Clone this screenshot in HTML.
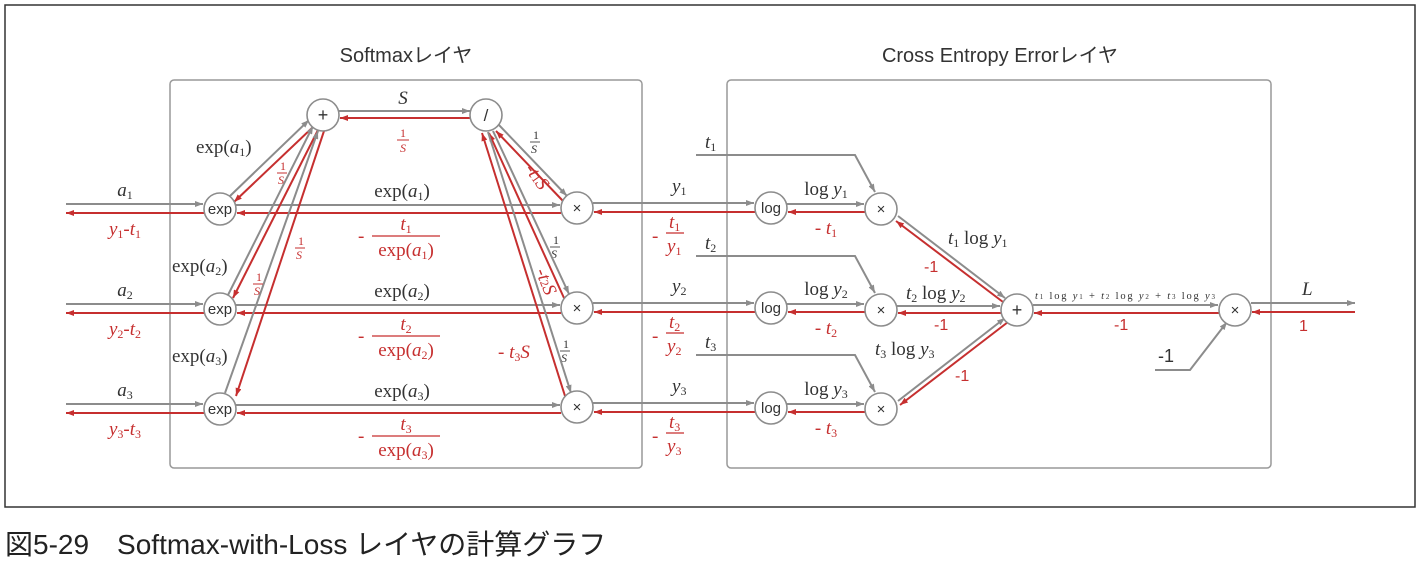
<!DOCTYPE html>
<html><head><meta charset="utf-8"><style>
html,body{margin:0;padding:0;background:#fff;width:1421px;height:566px;overflow:hidden}
svg{display:block}
.g{stroke:#8c8c8c;stroke-width:2;fill:none}
.r{stroke:#c62f2f;stroke-width:2;fill:none}
.n{fill:#fff;stroke:#8c8c8c;stroke-width:1.6}
.m{font-family:"Liberation Serif",serif;fill:#333}
.mr{font-family:"Liberation Serif",serif;fill:#c62f2f}
.s{font-family:"Liberation Sans",sans-serif;fill:#333}
.sr{font-family:"Liberation Sans",sans-serif;fill:#c62f2f}
.t{font-family:"Liberation Sans","Noto Sans CJK JP",sans-serif;fill:#333}
</style></head><body>
<svg width="1421" height="566" viewBox="0 0 1421 566" xmlns="http://www.w3.org/2000/svg" font-size="19">
<defs>
<marker id="ag" markerWidth="8" markerHeight="6" refX="8" refY="3" orient="auto" markerUnits="userSpaceOnUse"><path d="M0,0 L8,3 L0,6z" fill="#8c8c8c"/></marker>
<marker id="ar" markerWidth="8" markerHeight="6" refX="8" refY="3" orient="auto" markerUnits="userSpaceOnUse"><path d="M0,0 L8,3 L0,6z" fill="#c62f2f"/></marker>
</defs>
<rect x="5" y="5" width="1410" height="502" fill="none" stroke="#333" stroke-width="1.5"/>
<rect x="170" y="80" width="472" height="388" rx="4" fill="none" stroke="#999" stroke-width="1.5"/>
<rect x="727" y="80" width="544" height="388" rx="4" fill="none" stroke="#999" stroke-width="1.5"/>
<text x="406" y="62" class="t" font-size="20" text-anchor="middle">Softmaxレイヤ</text>
<text x="1000" y="62" class="t" font-size="20" text-anchor="middle">Cross Entropy Errorレイヤ</text>

<line class="g" x1="66" y1="204" x2="203" y2="204" marker-end="url(#ag)"/>
<line class="r" x1="204" y1="213" x2="66" y2="213" marker-end="url(#ar)"/>
<line class="g" x1="66" y1="304" x2="203" y2="304" marker-end="url(#ag)"/>
<line class="r" x1="204" y1="313" x2="66" y2="313" marker-end="url(#ar)"/>
<line class="g" x1="66" y1="404" x2="203" y2="404" marker-end="url(#ag)"/>
<line class="r" x1="204" y1="413" x2="66" y2="413" marker-end="url(#ar)"/>
<text x="125" y="196" class="m" text-anchor="middle"><tspan font-style="italic">a</tspan><tspan font-size="12" dy="3">1</tspan></text>
<text x="125" y="296" class="m" text-anchor="middle"><tspan font-style="italic">a</tspan><tspan font-size="12" dy="3">2</tspan></text>
<text x="125" y="396" class="m" text-anchor="middle"><tspan font-style="italic">a</tspan><tspan font-size="12" dy="3">3</tspan></text>
<text x="125" y="235" class="mr" text-anchor="middle"><tspan font-style="italic">y</tspan><tspan font-size="12" dy="3">1</tspan><tspan dy="-3">-</tspan><tspan font-style="italic">t</tspan><tspan font-size="12" dy="3">1</tspan></text>
<text x="125" y="335" class="mr" text-anchor="middle"><tspan font-style="italic">y</tspan><tspan font-size="12" dy="3">2</tspan><tspan dy="-3">-</tspan><tspan font-style="italic">t</tspan><tspan font-size="12" dy="3">2</tspan></text>
<text x="125" y="435" class="mr" text-anchor="middle"><tspan font-style="italic">y</tspan><tspan font-size="12" dy="3">3</tspan><tspan dy="-3">-</tspan><tspan font-style="italic">t</tspan><tspan font-size="12" dy="3">3</tspan></text>

<line class="g" x1="236" y1="205" x2="560" y2="205" marker-end="url(#ag)"/>
<line class="r" x1="561" y1="213" x2="237" y2="213" marker-end="url(#ar)"/>
<line class="g" x1="236" y1="305" x2="560" y2="305" marker-end="url(#ag)"/>
<line class="r" x1="561" y1="313" x2="237" y2="313" marker-end="url(#ar)"/>
<line class="g" x1="236" y1="405" x2="560" y2="405" marker-end="url(#ag)"/>
<line class="r" x1="561" y1="413" x2="237" y2="413" marker-end="url(#ar)"/>
<text x="402" y="197" class="m" text-anchor="middle">exp(<tspan font-style="italic">a</tspan><tspan font-size="12" dy="3">1</tspan><tspan dy="-3">)</tspan></text>
<text x="402" y="297" class="m" text-anchor="middle">exp(<tspan font-style="italic">a</tspan><tspan font-size="12" dy="3">2</tspan><tspan dy="-3">)</tspan></text>
<text x="402" y="397" class="m" text-anchor="middle">exp(<tspan font-style="italic">a</tspan><tspan font-size="12" dy="3">3</tspan><tspan dy="-3">)</tspan></text>

<text x="358" y="242" class="mr">-</text><text x="406" y="230" class="mr" text-anchor="middle" font-style="italic">t<tspan font-size="12" font-style="normal" dy="3">1</tspan></text><line x1="372" y1="236" x2="440" y2="236" stroke="#c62f2f" stroke-width="1.2"/><text x="406" y="256" class="mr" text-anchor="middle">exp(<tspan font-style="italic">a</tspan><tspan font-size="12" dy="3">1</tspan><tspan dy="-3">)</tspan></text>
<text x="358" y="342" class="mr">-</text><text x="406" y="330" class="mr" text-anchor="middle" font-style="italic">t<tspan font-size="12" font-style="normal" dy="3">2</tspan></text><line x1="372" y1="336" x2="440" y2="336" stroke="#c62f2f" stroke-width="1.2"/><text x="406" y="356" class="mr" text-anchor="middle">exp(<tspan font-style="italic">a</tspan><tspan font-size="12" dy="3">2</tspan><tspan dy="-3">)</tspan></text>
<text x="358" y="442" class="mr">-</text><text x="406" y="430" class="mr" text-anchor="middle" font-style="italic">t<tspan font-size="12" font-style="normal" dy="3">3</tspan></text><line x1="372" y1="436" x2="440" y2="436" stroke="#c62f2f" stroke-width="1.2"/><text x="406" y="456" class="mr" text-anchor="middle">exp(<tspan font-style="italic">a</tspan><tspan font-size="12" dy="3">3</tspan><tspan dy="-3">)</tspan></text>

<line class="g" x1="339" y1="111" x2="470" y2="111" marker-end="url(#ag)"/>
<line class="r" x1="470" y1="118" x2="340" y2="118" marker-end="url(#ar)"/>
<text x="403" y="104" class="m" text-anchor="middle" font-style="italic">S</text>
<g font-size="12">
<text x="403" y="137" class="mr" text-anchor="middle">1</text><line x1="397" y1="140" x2="409" y2="140" stroke="#c62f2f"/><text x="403" y="152" class="mr" text-anchor="middle" font-style="italic">S</text>
</g>

<line class="g" x1="230" y1="196" x2="309" y2="120" marker-end="url(#ag)"/>
<line class="r" x1="313" y1="127" x2="234" y2="202" marker-end="url(#ar)"/>
<line class="g" x1="228" y1="295" x2="313" y2="126" marker-end="url(#ag)"/>
<line class="r" x1="318" y1="130" x2="233" y2="298" marker-end="url(#ar)"/>
<line class="g" x1="225" y1="393" x2="318" y2="131" marker-end="url(#ag)"/>
<line class="r" x1="324" y1="131" x2="236" y2="396" marker-end="url(#ar)"/>
<text x="196" y="153" class="m">exp(<tspan font-style="italic">a</tspan><tspan font-size="12" dy="3">1</tspan><tspan dy="-3">)</tspan></text>
<text x="172" y="272" class="m">exp(<tspan font-style="italic">a</tspan><tspan font-size="12" dy="3">2</tspan><tspan dy="-3">)</tspan></text>
<text x="172" y="362" class="m">exp(<tspan font-style="italic">a</tspan><tspan font-size="12" dy="3">3</tspan><tspan dy="-3">)</tspan></text>
<g font-size="12">
<text x="280" y="170" class="mr">1</text><line x1="277" y1="173" x2="287" y2="173" stroke="#c62f2f"/><text x="278" y="184" class="mr" font-style="italic">S</text>
<text x="298" y="245" class="mr">1</text><line x1="295" y1="248" x2="305" y2="248" stroke="#c62f2f"/><text x="296" y="259" class="mr" font-style="italic">S</text>
<text x="256" y="281" class="mr">1</text><line x1="253" y1="284" x2="263" y2="284" stroke="#c62f2f"/><text x="254" y="295" class="mr" font-style="italic">S</text>
<text x="533" y="139" class="m">1</text><line x1="530" y1="142" x2="540" y2="142" stroke="#555"/><text x="531" y="153" class="m" font-style="italic">S</text>
<text x="553" y="244" class="m">1</text><line x1="550" y1="247" x2="560" y2="247" stroke="#555"/><text x="551" y="258" class="m" font-style="italic">S</text>
<text x="563" y="348" class="m">1</text><line x1="560" y1="351" x2="570" y2="351" stroke="#555"/><text x="561" y="362" class="m" font-style="italic">S</text>
</g>

<line class="g" x1="498" y1="124" x2="567" y2="196" marker-end="url(#ag)"/>
<line class="r" x1="563" y1="201" x2="496" y2="131" marker-end="url(#ar)"/>
<line class="g" x1="493" y1="131" x2="569" y2="294" marker-end="url(#ag)"/>
<line class="r" x1="564" y1="298" x2="489" y2="133" marker-end="url(#ar)"/>
<line class="g" x1="488" y1="132" x2="571" y2="393" marker-end="url(#ag)"/>
<line class="r" x1="565" y1="396" x2="482" y2="133" marker-end="url(#ar)"/>
<text x="514" y="175" class="mr" transform="rotate(55 525 182)">-<tspan font-style="italic">t</tspan><tspan font-size="12">1</tspan><tspan font-style="italic">S</tspan></text>
<text x="522" y="277" class="mr" transform="rotate(68 533 284)">-<tspan font-style="italic">t</tspan><tspan font-size="12">2</tspan><tspan font-style="italic">S</tspan></text>
<text x="498" y="358" class="mr">-<tspan font-style="italic"> t</tspan><tspan font-size="12" dy="3">3</tspan><tspan font-style="italic" dy="-3">S</tspan></text>

<line class="g" x1="593" y1="203" x2="754" y2="203" marker-end="url(#ag)"/>
<line class="r" x1="755" y1="212" x2="594" y2="212" marker-end="url(#ar)"/>
<line class="g" x1="593" y1="303" x2="754" y2="303" marker-end="url(#ag)"/>
<line class="r" x1="755" y1="312" x2="594" y2="312" marker-end="url(#ar)"/>
<line class="g" x1="593" y1="403" x2="754" y2="403" marker-end="url(#ag)"/>
<line class="r" x1="755" y1="412" x2="594" y2="412" marker-end="url(#ar)"/>
<text x="672" y="192" class="m" font-style="italic">y<tspan font-size="12" font-style="normal" dy="3">1</tspan></text>
<text x="672" y="292" class="m" font-style="italic">y<tspan font-size="12" font-style="normal" dy="3">2</tspan></text>
<text x="672" y="392" class="m" font-style="italic">y<tspan font-size="12" font-style="normal" dy="3">3</tspan></text>
<text x="652" y="242" class="mr">-</text><text x="669" y="228" class="mr" font-style="italic">t<tspan font-size="12" font-style="normal" dy="3">1</tspan></text><line x1="666" y1="233" x2="684" y2="233" stroke="#c62f2f" stroke-width="1.2"/><text x="667" y="252" class="mr" font-style="italic">y<tspan font-size="12" font-style="normal" dy="3">1</tspan></text>
<text x="652" y="342" class="mr">-</text><text x="669" y="328" class="mr" font-style="italic">t<tspan font-size="12" font-style="normal" dy="3">2</tspan></text><line x1="666" y1="333" x2="684" y2="333" stroke="#c62f2f" stroke-width="1.2"/><text x="667" y="352" class="mr" font-style="italic">y<tspan font-size="12" font-style="normal" dy="3">2</tspan></text>
<text x="652" y="442" class="mr">-</text><text x="669" y="428" class="mr" font-style="italic">t<tspan font-size="12" font-style="normal" dy="3">3</tspan></text><line x1="666" y1="433" x2="684" y2="433" stroke="#c62f2f" stroke-width="1.2"/><text x="667" y="452" class="mr" font-style="italic">y<tspan font-size="12" font-style="normal" dy="3">3</tspan></text>

<line class="g" x1="787" y1="204" x2="864" y2="204" marker-end="url(#ag)"/>
<line class="r" x1="865" y1="212" x2="788" y2="212" marker-end="url(#ar)"/>
<line class="g" x1="787" y1="304" x2="864" y2="304" marker-end="url(#ag)"/>
<line class="r" x1="865" y1="312" x2="788" y2="312" marker-end="url(#ar)"/>
<line class="g" x1="787" y1="404" x2="864" y2="404" marker-end="url(#ag)"/>
<line class="r" x1="865" y1="412" x2="788" y2="412" marker-end="url(#ar)"/>
<text x="826" y="195" class="m" text-anchor="middle">log <tspan font-style="italic">y</tspan><tspan font-size="12" dy="3">1</tspan></text>
<text x="826" y="295" class="m" text-anchor="middle">log <tspan font-style="italic">y</tspan><tspan font-size="12" dy="3">2</tspan></text>
<text x="826" y="395" class="m" text-anchor="middle">log <tspan font-style="italic">y</tspan><tspan font-size="12" dy="3">3</tspan></text>
<text x="826" y="234" class="mr" text-anchor="middle">-<tspan font-style="italic"> t</tspan><tspan font-size="12" dy="3">1</tspan></text>
<text x="826" y="334" class="mr" text-anchor="middle">-<tspan font-style="italic"> t</tspan><tspan font-size="12" dy="3">2</tspan></text>
<text x="826" y="434" class="mr" text-anchor="middle">-<tspan font-style="italic"> t</tspan><tspan font-size="12" dy="3">3</tspan></text>

<polyline class="g" points="696,155 855,155 875,192" marker-end="url(#ag)"/>
<polyline class="g" points="696,256 855,256 875,293" marker-end="url(#ag)"/>
<polyline class="g" points="696,355 855,355 875,392" marker-end="url(#ag)"/>
<text x="705" y="148" class="m" font-style="italic">t<tspan font-size="12" font-style="normal" dy="3">1</tspan></text>
<text x="705" y="249" class="m" font-style="italic">t<tspan font-size="12" font-style="normal" dy="3">2</tspan></text>
<text x="705" y="348" class="m" font-style="italic">t<tspan font-size="12" font-style="normal" dy="3">3</tspan></text>

<line class="g" x1="898" y1="216" x2="1005" y2="298" marker-end="url(#ag)"/>
<line class="r" x1="1003" y1="302" x2="896" y2="221" marker-end="url(#ar)"/>
<line class="g" x1="897" y1="306" x2="1000" y2="306" marker-end="url(#ag)"/>
<line class="r" x1="1001" y1="313" x2="898" y2="313" marker-end="url(#ar)"/>
<line class="g" x1="898" y1="401" x2="1005" y2="318" marker-end="url(#ag)"/>
<line class="r" x1="1008" y1="322" x2="900" y2="405" marker-end="url(#ar)"/>
<text x="948" y="244" class="m"><tspan font-style="italic">t</tspan><tspan font-size="12" dy="3">1</tspan><tspan dy="-3"> log </tspan><tspan font-style="italic">y</tspan><tspan font-size="12" dy="3">1</tspan></text>
<text x="906" y="299" class="m"><tspan font-style="italic">t</tspan><tspan font-size="12" dy="3">2</tspan><tspan dy="-3"> log </tspan><tspan font-style="italic">y</tspan><tspan font-size="12" dy="3">2</tspan></text>
<text x="875" y="355" class="m"><tspan font-style="italic">t</tspan><tspan font-size="12" dy="3">3</tspan><tspan dy="-3"> log </tspan><tspan font-style="italic">y</tspan><tspan font-size="12" dy="3">3</tspan></text>
<g font-size="16">
<text x="924" y="272" class="sr">-1</text>
<text x="934" y="330" class="sr">-1</text>
<text x="955" y="381" class="sr">-1</text>
<text x="1114" y="330" class="sr">-1</text>
<text x="1299" y="331" class="sr">1</text>
</g>

<line class="g" x1="1033" y1="305" x2="1218" y2="305" marker-end="url(#ag)"/>
<line class="r" x1="1219" y1="313" x2="1034" y2="313" marker-end="url(#ar)"/>
<text x="1035" y="299" class="m" font-size="10.5" textLength="180"><tspan font-style="italic">t</tspan><tspan font-size="7">1</tspan> log <tspan font-style="italic">y</tspan><tspan font-size="7">1</tspan> + <tspan font-style="italic">t</tspan><tspan font-size="7">2</tspan> log <tspan font-style="italic">y</tspan><tspan font-size="7">2</tspan> + <tspan font-style="italic">t</tspan><tspan font-size="7">3</tspan> log <tspan font-style="italic">y</tspan><tspan font-size="7">3</tspan></text>
<polyline class="g" points="1155,370 1190,370 1227,322" marker-end="url(#ag)"/>
<text x="1158" y="362" class="s" font-size="18">-1</text>
<line class="g" x1="1251" y1="303" x2="1355" y2="303" marker-end="url(#ag)"/>
<line class="r" x1="1355" y1="312" x2="1252" y2="312" marker-end="url(#ar)"/>
<text x="1302" y="295" class="m" font-style="italic">L</text>

<circle class="n" cx="220" cy="209" r="16"/><circle class="n" cx="220" cy="309" r="16"/><circle class="n" cx="220" cy="409" r="16"/>
<circle class="n" cx="323" cy="115" r="16"/><circle class="n" cx="486" cy="115" r="16"/>
<circle class="n" cx="577" cy="208" r="16"/><circle class="n" cx="577" cy="308" r="16"/><circle class="n" cx="577" cy="407" r="16"/>
<circle class="n" cx="771" cy="208" r="16"/><circle class="n" cx="771" cy="308" r="16"/><circle class="n" cx="771" cy="408" r="16"/>
<circle class="n" cx="881" cy="209" r="16"/><circle class="n" cx="881" cy="310" r="16"/><circle class="n" cx="881" cy="409" r="16"/>
<circle class="n" cx="1017" cy="310" r="16"/><circle class="n" cx="1235" cy="310" r="16"/>
<g font-size="15" text-anchor="middle">
<text x="220" y="214" class="s">exp</text>
<text x="220" y="314" class="s">exp</text>
<text x="220" y="414" class="s">exp</text>
<text x="323" y="121" class="s" font-size="18">+</text>
<text x="486" y="121" class="s" font-size="17">/</text>
<text x="577" y="213" class="s">×</text>
<text x="577" y="313" class="s">×</text>
<text x="577" y="412" class="s">×</text>
<text x="771" y="213" class="s">log</text>
<text x="771" y="313" class="s">log</text>
<text x="771" y="413" class="s">log</text>
<text x="881" y="214" class="s">×</text>
<text x="881" y="315" class="s">×</text>
<text x="881" y="414" class="s">×</text>
<text x="1017" y="316" class="s" font-size="18">+</text>
<text x="1235" y="315" class="s">×</text>
</g>

<text x="5" y="554" font-family="'Liberation Sans','Noto Sans CJK JP',sans-serif" font-size="28" fill="#222">図5-29　Softmax-with-Loss レイヤの計算グラフ</text>
</svg>
</body></html>
